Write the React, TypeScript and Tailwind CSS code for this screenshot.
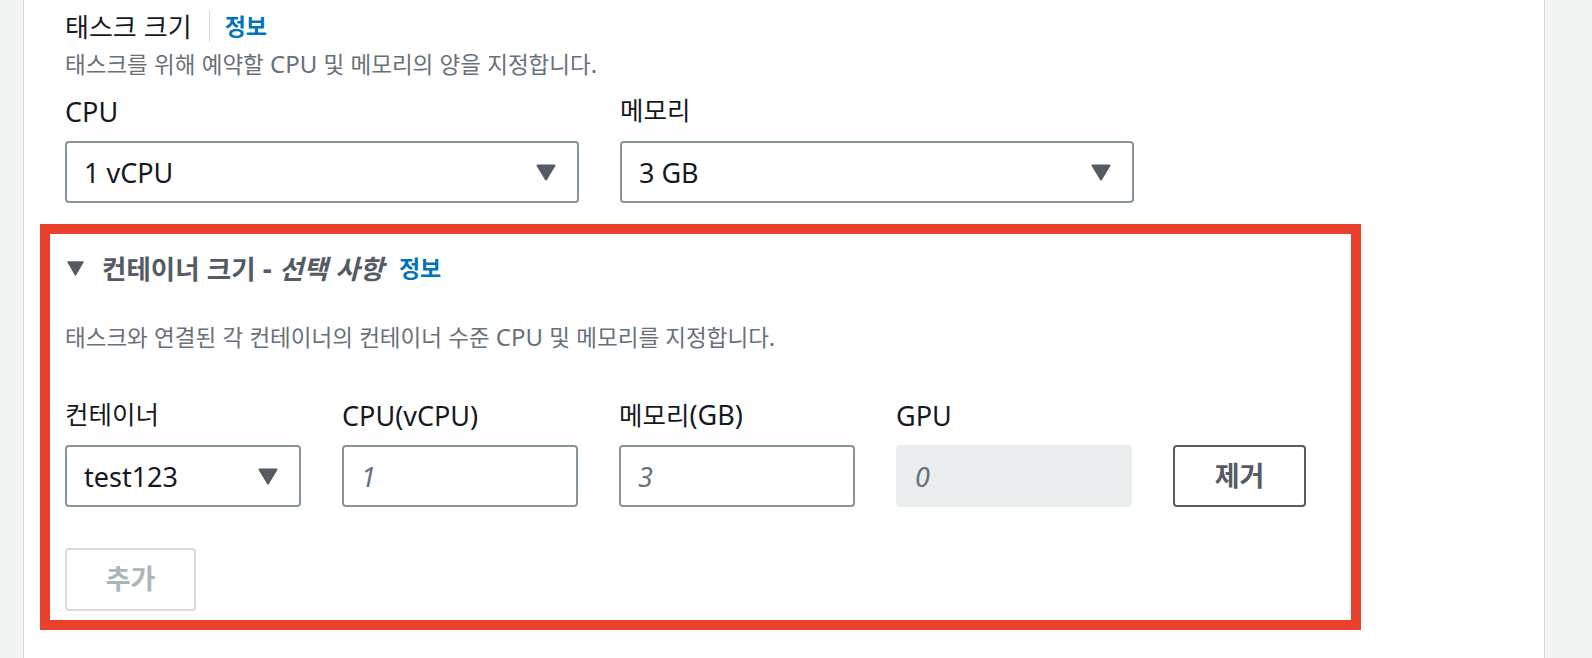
import React from "react";

const HANGUL = /([\uAC00-\uD7A3]+)/;

function Mixed({ text, ko, en }: { text: string; ko: string; en: string }) {
  const parts = text.split(HANGUL);
  return (
    <>
      {parts.map((p, i) =>
        p ? (
          <span key={i} className={/[\uAC00-\uD7A3]/.test(p) ? ko : en}>
            {p}
          </span>
        ) : null
      )}
    </>
  );
}

function Caret() {
  return (
    <svg width="20" height="17" viewBox="0 0 20 17" className="shrink-0">
      <polygon points="1.5,1.5 18.5,1.5 10,15.5" fill="#545b64" stroke="#545b64" strokeWidth="2" strokeLinejoin="round" />
    </svg>
  );
}

function Select({ value }: { value: string }) {
  return (
    <div className="flex h-[62px] items-center justify-between rounded-[4px] border-2 border-[#879596] bg-white pl-[17px] pr-[21px]">
      <span className="text-[27px] leading-none text-[#16191f]">{value}</span>
      <Caret />
    </div>
  );
}

function Label({ text }: { text: string }) {
  return (
    <div className="flex h-[32px] items-center overflow-visible whitespace-nowrap text-[#16191f]">
      <span className="leading-none">
        <Mixed text={text} ko="text-[25.5px]" en="text-[27px]" />
      </span>
    </div>
  );
}

function NumInput({ placeholder, disabled }: { placeholder: string; disabled?: boolean }) {
  return (
    <input
      readOnly
      disabled={disabled}
      placeholder={placeholder}
      className={
        disabled
          ? "h-[62px] w-full rounded-[4px] border-2 border-[#eaeded] bg-[#eaeded] pl-[17px] text-[27px] outline-none placeholder:italic placeholder:text-[#687078]"
          : "h-[62px] w-full rounded-[4px] border-2 border-[#879596] bg-white pl-[17px] text-[27px] outline-none placeholder:italic placeholder:text-[#687078]"
      }
    />
  );
}

export default function App() {
  return (
    <div className="flex h-[658px] w-[1592px] overflow-hidden bg-[#f2f3f3] font-['Noto_Sans','Noto_Sans_CJK_KR',sans-serif] text-[#16191f]">
      <div className="w-[24px] shrink-0 border-r border-[#d5dbdb]" />
      <main className="w-[1520px] shrink-0 bg-white pt-[10px]">
        <div className="pl-[41px]">
          <div className="flex h-[32px] items-center">
            <h2 className="font-normal leading-none">
              <Mixed text="태스크 크기" ko="text-[26px]" en="text-[27px]" />
            </h2>
            <span className="ml-[17px] mr-[15px] h-[32px] w-px bg-[#d5dbdb]" />
            <a className="text-[23px] font-bold leading-none text-[#0073bb]">정보</a>
          </div>
          <p className="mt-[8px] flex h-[28px] items-center whitespace-nowrap text-[#687078]">
            <span className="leading-none">
              <Mixed text="태스크를 위해 예약할 CPU 및 메모리의 양을 지정합니다." ko="text-[22.5px]" en="text-[24px]" />
            </span>
          </p>
          <div className="mt-[17px] grid w-[1069px] grid-cols-2 gap-x-[41px]">
            <div>
              <Label text="CPU" />
              <div className="mt-[14px]">
                <Select value="1 vCPU" />
              </div>
            </div>
            <div>
              <Label text="메모리" />
              <div className="mt-[14px]">
                <Select value="3 GB" />
              </div>
            </div>
          </div>
        </div>

        <section className="mt-[21px] ml-[16px] w-[1321px] border-[10px] border-[#e8402a] pt-[18px] pb-[9px] pl-[15px]">
          <div className="flex h-[32px] items-center">
            <svg width="17" height="15" viewBox="0 0 17 15" className="ml-[2px] mr-[18px] shrink-0">
              <polygon points="1,1 16,1 8.5,14" fill="#545b64" stroke="#545b64" strokeWidth="1.5" strokeLinejoin="round" />
            </svg>
            <h3 className="whitespace-nowrap font-bold leading-none text-[#545b64]">
              <Mixed text="컨테이너 크기 - " ko="text-[26.5px]" en="text-[28px]" />
              <em className="italic">
                <Mixed text="선택 사항" ko="text-[26.5px]" en="text-[28px]" />
              </em>
            </h3>
            <a className="ml-[15px] text-[23px] font-bold leading-none text-[#0073bb]">정보</a>
          </div>
          <p className="mt-[39px] flex h-[28px] items-center whitespace-nowrap text-[#687078]">
            <span className="leading-none">
              <Mixed text="태스크와 연결된 각 컨테이너의 컨테이너 수준 CPU 및 메모리를 지정합니다." ko="text-[22.5px]" en="text-[24px]" />
            </span>
          </p>
          <div className="mt-[48px] grid grid-cols-[236px_236px_236px_236px_133px] gap-x-[41px] gap-y-[14px]">
            <Label text="컨테이너" />
            <Label text="CPU(vCPU)" />
            <Label text="메모리(GB)" />
            <Label text="GPU" />
            <div />
            <Select value="test123" />
            <NumInput placeholder="1" />
            <NumInput placeholder="3" />
            <NumInput placeholder="0" disabled />
            <button className="h-[62px] rounded-[4px] border-2 border-[#545b64] bg-white text-[27px] font-bold text-[#545b64]">
              제거
            </button>
          </div>
          <button className="mt-[41px] h-[63px] w-[131px] rounded-[4px] border-2 border-[#d5dbdb] bg-white text-[27px] font-bold text-[#aab7b8]">
            추가
          </button>
        </section>
      </main>
      <div className="flex-1 border-l border-[#d5dbdb]" />
    </div>
  );
}
